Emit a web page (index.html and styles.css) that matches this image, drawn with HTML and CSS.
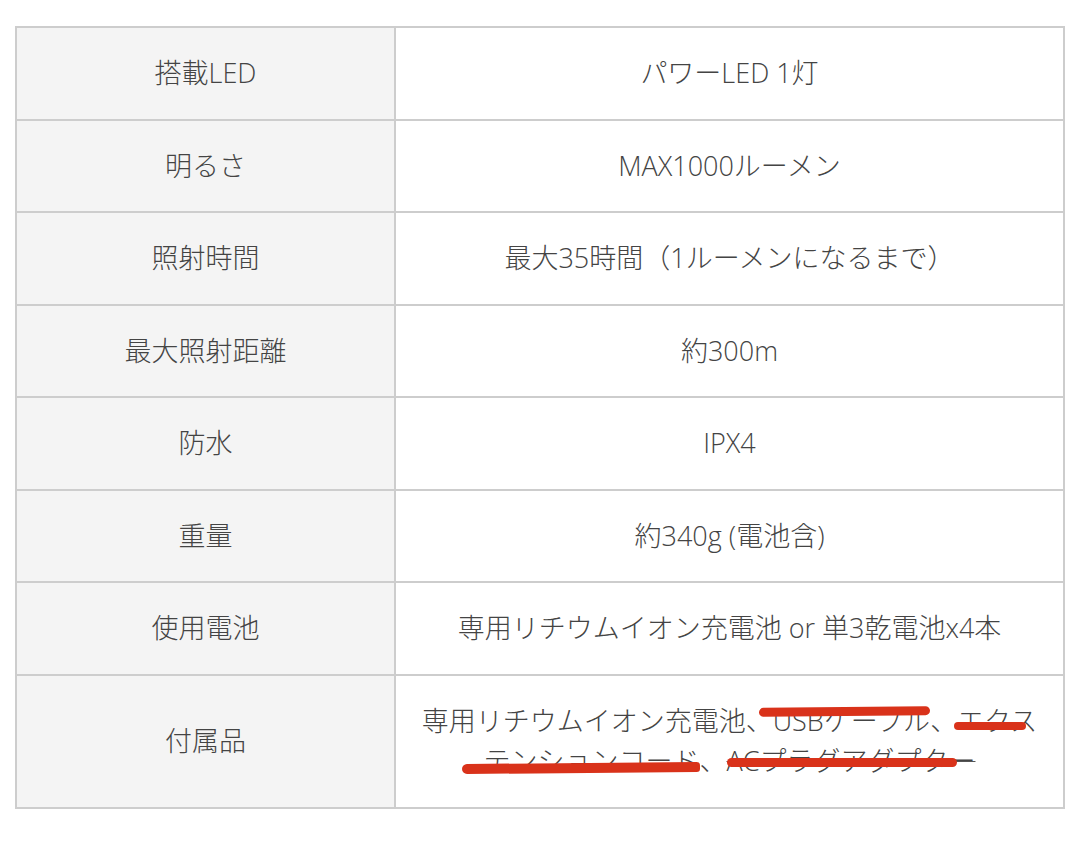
FILE: index.html
```html
<!DOCTYPE html>
<html lang="ja">
<head>
<meta charset="utf-8">
<title>仕様</title>
<link rel="stylesheet" href="styles.css">
</head>
<body>
<div class="page">
  <table class="spec">
    <tr><th>搭載LED</th><td>パワーLED 1灯</td></tr>
    <tr><th>明るさ</th><td>MAX1000ルーメン</td></tr>
    <tr><th>照射時間</th><td>最大35時間（1ルーメンになるまで）</td></tr>
    <tr><th>最大照射距離</th><td>約300m</td></tr>
    <tr><th>防水</th><td>IPX4</td></tr>
    <tr><th>重量</th><td>約340g (電池含)</td></tr>
    <tr><th>使用電池</th><td>専用リチウムイオン充電池 or 単3乾電池x4本</td></tr>
    <tr class="last"><th>付属品</th><td>専用リチウムイオン充電池、<span class="mark m1">USBケーブル</span>、<span class="mark m2">エクス</span><br><span class="mark m3">テンションコード</span>、<span class="mark m4 gray">ACプラグアダプター</span></td></tr>
  </table>
</div>
</body>
</html>
```

FILE: styles.css
```css
html, body {
  margin: 0;
  padding: 0;
  background: #ffffff;
}

.page {
  padding: 26px 15px 0 15px;
  font-family: "Open Sans", "Noto Sans CJK JP", sans-serif;
  color: #444444;
}

.spec {
  width: 1050px;
  border-collapse: collapse;
  border: 2px solid #cdcdcd;
  font-size: 27px;
  line-height: 40px;
}

.spec th,
.spec td {
  border: 2px solid #cdcdcd;
  height: 92.5px;
  box-sizing: border-box;
  padding: 0 8px;
  text-align: center;
  vertical-align: middle;
  font-weight: 300;
}

.spec th {
  width: 379px;
  background: #f4f4f4;
}

.spec td {
  background: #ffffff;
}

.spec tr.last th,
.spec tr.last td {
  height: 133px;
}

.mark {
  position: relative;
}

.mark::after {
  content: "";
  position: absolute;
  background: #d9321a;
  border-radius: 5px;
}

.m1::after {
  left: -14px;
  right: 0;
  top: 5px;
  height: 9px;
  transform: rotate(-0.6deg);
}

.m2::after {
  left: -3px;
  right: 11px;
  top: 20px;
  height: 8px;
}

.m3::after {
  left: -22px;
  right: 0;
  top: 21px;
  height: 10px;
  border-radius: 6px 4px 4px 6px;
  transform: rotate(-0.5deg);
}

.m4::after {
  left: 0;
  right: 18px;
  top: 16px;
  height: 9px;
}

.gray {
  text-decoration: line-through;
  text-decoration-color: #555;
  text-decoration-thickness: 1px;
}
```
